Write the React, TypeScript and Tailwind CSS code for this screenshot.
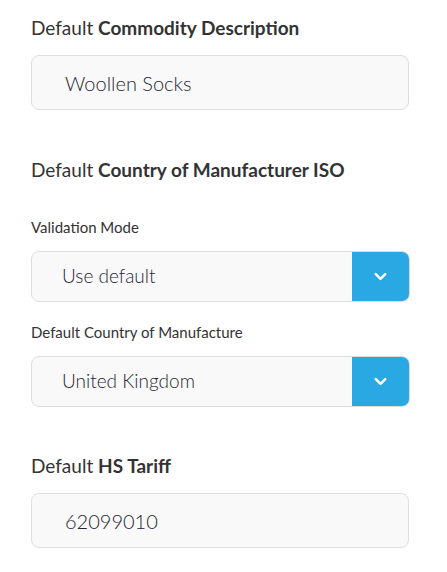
import { ChevronDown } from 'lucide-react'

const FONT = { fontFamily: 'Lato, "Open Sans", sans-serif' }

function Heading({ plain, bold }: { plain: string; bold: string }) {
  return (
    <h2 className="text-[19px] leading-[24px] text-[#333]">
      {plain} <span className="font-bold">{bold}</span>
    </h2>
  )
}

function TextBox({ value }: { value: string }) {
  return (
    <div className="flex h-[55px] w-[378px] items-center rounded-lg border border-[#dedede] bg-[#f9f9f9] pl-[33px] text-[20px] font-light text-[#262633]">
      {value}
    </div>
  )
}

function Select({ value }: { value: string }) {
  return (
    <div className="flex h-[51px] w-[379px] overflow-hidden rounded-lg border border-[#dedede] bg-[#f9f9f9]">
      <div className="flex flex-1 items-center pl-[30px] text-[19px] font-light text-[#262633]">{value}</div>
      <div className="flex w-[57px] items-center justify-center bg-[#29a8e3] text-white">
        <ChevronDown size={19} strokeWidth={3.2} />
      </div>
    </div>
  )
}

export default function App() {
  return (
    <div className="h-[572px] w-[447px] bg-white pl-[31px]" style={FONT}>
      <div className="pt-[16px]">
        <Heading plain="Default" bold="Commodity Description" />
      </div>
      <div className="mt-[15px]">
        <TextBox value="Woollen Socks" />
      </div>

      <div className="mt-[48px]">
        <Heading plain="Default" bold="Country of Manufacturer ISO" />
      </div>

      <p className="mt-[35px] text-[15px] leading-[20px] text-[#333]">Validation Mode</p>
      <div className="mt-[14px]">
        <Select value="Use default" />
      </div>

      <p className="mt-[20px] text-[15px] leading-[20px] text-[#333]">Default Country of Manufacture</p>
      <div className="mt-[14px]">
        <Select value="United Kingdom" />
      </div>

      <div className="mt-[47px]">
        <Heading plain="Default" bold="HS Tariff" />
      </div>
      <div className="mt-[15px]">
        <TextBox value="62099010" />
      </div>
    </div>
  )
}
